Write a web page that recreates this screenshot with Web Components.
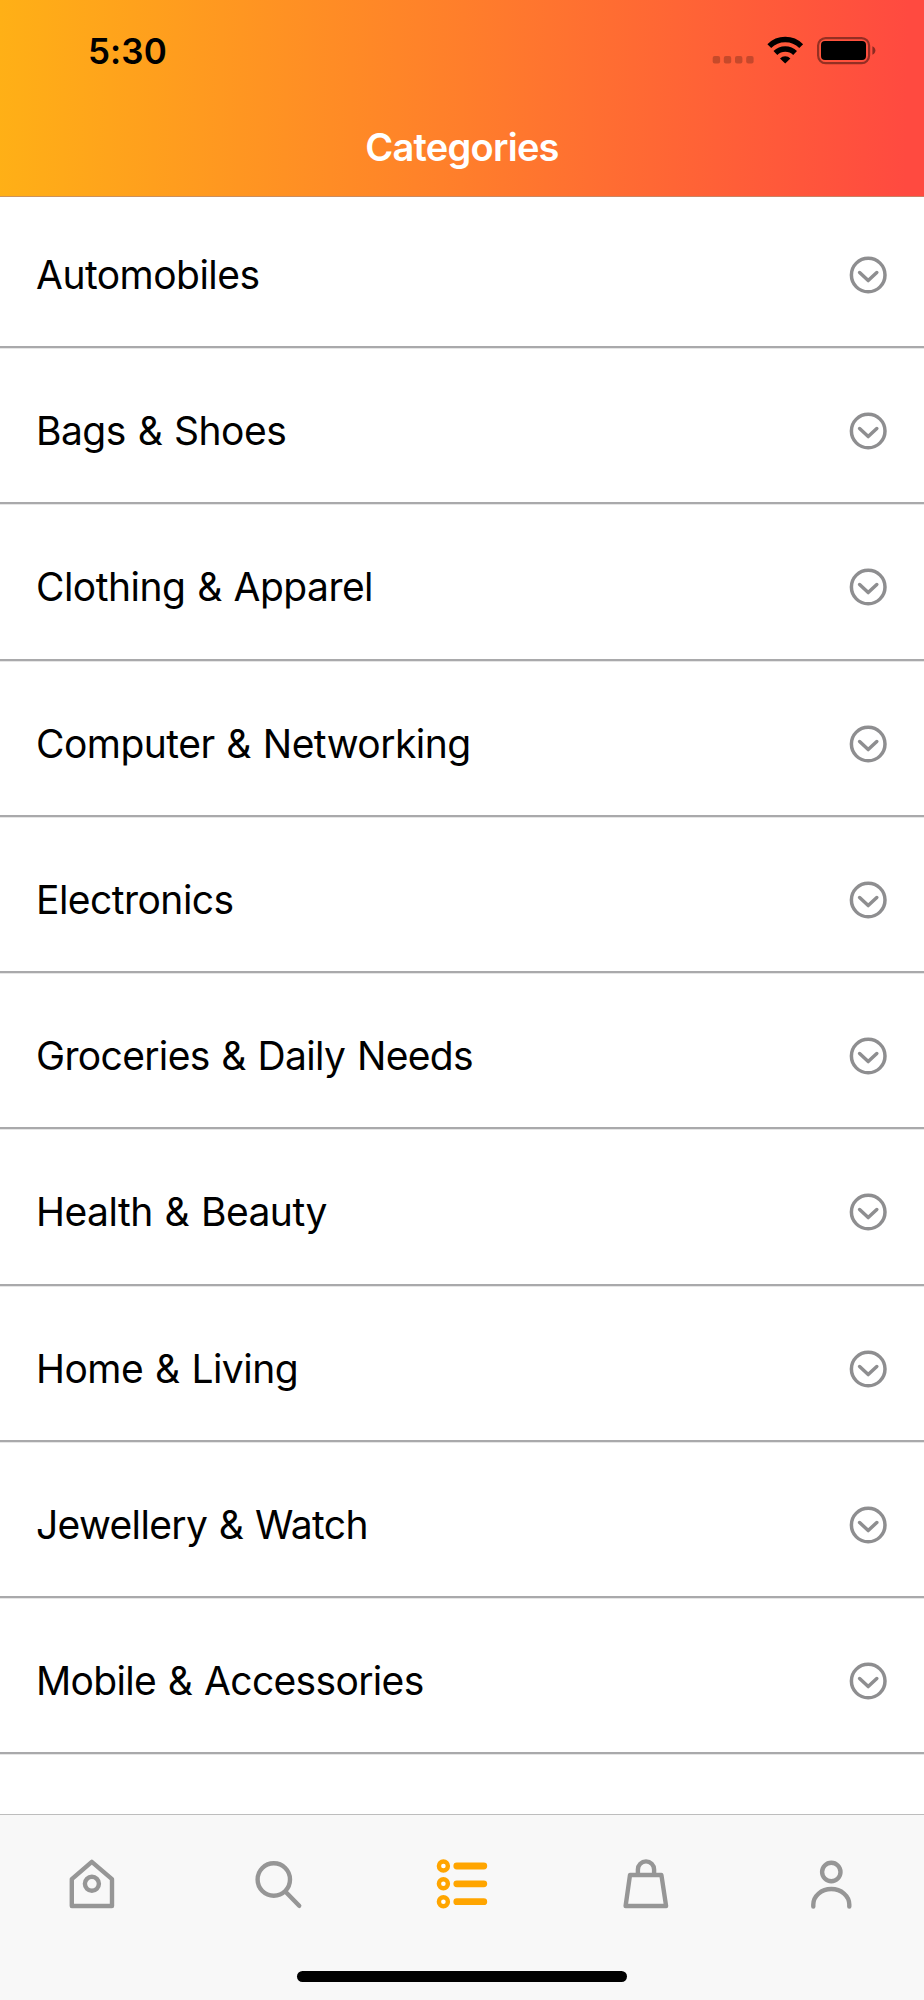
<!DOCTYPE html>
<html lang="en">
<head>
<meta charset="utf-8">
<title>Categories</title>
<style>
  body {
    margin: 0;
    background: #fff;
    font-family: Inter, "Liberation Sans", sans-serif;
    color: #000;
  }

  .tight {
    --tracking: -0.66px;
  }
</style>
</head>
<body>
<app-screen>
  <app-header slot="header" time="5:30">Categories</app-header>
  <category-row>Automobiles</category-row>
  <category-row>Bags &amp; Shoes</category-row>
  <category-row>Clothing &amp; Apparel</category-row>
  <category-row>Computer &amp; Networking</category-row>
  <category-row>Electronics</category-row>
  <category-row class="tight">Groceries &amp; Daily Needs</category-row>
  <category-row>Health &amp; Beauty</category-row>
  <category-row>Home &amp; Living</category-row>
  <category-row class="tight">Jewellery &amp; Watch</category-row>
  <category-row class="tight">Mobile &amp; Accessories</category-row>
  <tab-bar slot="footer">
    <tab-item icon="home"></tab-item>
    <tab-item icon="search"></tab-item>
    <tab-item icon="list" active></tab-item>
    <tab-item icon="bag"></tab-item>
    <tab-item icon="user"></tab-item>
  </tab-bar>
</app-screen>

<script>
class BaseElement extends HTMLElement {
  constructor() {
    super();
    this.attachShadow({ mode: 'open' });
  }

  connectedCallback() {
    this.shadowRoot.innerHTML = this.render();
  }
}

class AppScreen extends BaseElement {
  render() {
    return `
      <style>
        :host {
          display: flex;
          flex-direction: column;
          height: 2000px;
          overflow: hidden;
        }

        .list {
          flex: 1;
          min-height: 0;
          overflow: hidden;
        }

        /* the list is scrolled a little under the header */
        .inner {
          margin-top: -5.2px;
        }
      </style>
      <slot name="header"></slot>
      <div class="list"><div class="inner"><slot></slot></div></div>
      <slot name="footer"></slot>
    `;
  }
}

class StatusBar extends BaseElement {
  render() {
    return `
      <style>
        :host {
          display: flex;
          justify-content: space-between;
          height: 98px;
          padding: 0 48px 0 88px;
        }

        .time {
          margin-top: 29px;
          font-size: 35px;
          line-height: 44px;
          font-weight: 600;
          letter-spacing: 0.1px;
        }

        svg {
          display: block;
          margin-top: 30px;
        }
      </style>
      <span class="time">${this.getAttribute('time')}</span>
      <svg width="164" height="40" viewBox="712 30 164 40">
        <g fill="#000" opacity="0.22">
          <rect x="712.7" y="56" width="7.4" height="7.4" rx="2"/>
          <rect x="723.8" y="56" width="7.4" height="7.4" rx="2"/>
          <rect x="735" y="56" width="7.4" height="7.4" rx="2"/>
          <rect x="746.2" y="56" width="7.4" height="7.4" rx="2"/>
        </g>
        <g fill="none" stroke="#000" stroke-width="5.4">
          <path d="M769.3 46.2a22.5 22.5 0 0 1 31.9 0"/>
          <path d="M775.4 53a14 14 0 0 1 19.7 0"/>
        </g>
        <path d="M785.2 63.6l-5.2-5.2a7.4 7.4 0 0 1 10.4 0z"/>
        <rect x="818.1" y="38.1" width="51" height="25" rx="7.5" fill="none" stroke="#000" stroke-opacity="0.42" stroke-width="2.2"/>
        <rect x="821" y="41" width="45" height="19" rx="4"/>
        <path d="M872.4 46.2c4 1.6 4 6.8 0 8.6z" fill-opacity="0.45"/>
      </svg>
    `;
  }
}

class AppHeader extends BaseElement {
  render() {
    return `
      <style>
        :host {
          display: block;
          box-sizing: border-box;
          flex: none;
          height: 197px;
          border-bottom: 1px solid rgba(190, 140, 110, 0.8);
          background: linear-gradient(91deg, #ffb016 0%, #ff7e2b 50%, #ff4a40 98%);
          position: relative;
          z-index: 1;
        }

        .title {
          text-align: center;
          font-size: 38px;
          line-height: 99px;
          font-weight: 600;
          color: #fff;
          letter-spacing: -0.75px;
        }
      </style>
      <status-bar time="${this.getAttribute('time')}"></status-bar>
      <div class="title"><slot></slot></div>
    `;
  }
}

class CategoryRow extends BaseElement {
  render() {
    return `
      <style>
        :host {
          display: flex;
          align-items: center;
          justify-content: space-between;
          box-sizing: border-box;
          height: 156.25px;
          padding: 12px 36px 0;
          border-bottom: 2px solid #a9a9ab;
          box-shadow: 0 1px #e6e6e6;
        }

        .label {
          font-size: 39px;
          line-height: 48px;
          letter-spacing: var(--tracking, -0.53px);
          word-spacing: 1.4px;
          white-space: nowrap;
        }

        svg {
          display: block;
          flex: none;
        }
      </style>
      <span class="label"><slot></slot></span>
      <svg width="40" height="40" viewBox="0 0 40 40" fill="none" stroke="#8e8e90" stroke-width="3.5" stroke-linecap="round" stroke-linejoin="round">
        <circle cx="20.2" cy="20" r="16.8"/>
        <path d="M11.6 17.5l8.6 8.1 8.6-8.1"/>
      </svg>
    `;
  }
}

const icons = {
  home: `
    <path d="M72.2 1879.2L92.2 1861.8L112.4 1879.2V1906H72.2Z"/>
    <circle cx="92.3" cy="1883.8" r="7"/>`,
  search: `
    <circle cx="274" cy="1879.5" r="16.2"/>
    <path d="M286 1892L299.4 1905.8"/>`,
  list: `
    <g stroke-width="4.4" fill="#fff">
      <circle cx="443.4" cy="1866" r="4.5"/>
      <circle cx="443.4" cy="1883.8" r="4.5"/>
      <circle cx="443.4" cy="1901.7" r="4.5"/>
    </g>
    <path d="M456.8 1866H483.8M456.8 1883.8H483.8M456.8 1901.7H483.8" stroke-width="6.8"/>`,
  bag: `
    <path d="M629.8 1875H661.2L665.9 1906H625.4Z"/>
    <path d="M637.7 1875V1869.5a8.1 8.1 0 0 1 16.2 0V1875" stroke-linecap="butt"/>`,
  user: `
    <circle cx="830.9" cy="1872" r="9.2"/>
    <path d="M812.9 1906.6V1904.6a18 15.6 0 0 1 36 0V1906.6"/>`
};

// left edge of each icon's 60px wide viewBox
const origins = { home: 62.4, search: 247.2, list: 432, bag: 616.8, user: 801.6 };

class TabItem extends BaseElement {
  render() {
    const icon = this.getAttribute('icon');
    return `
      <style>
        :host {
          flex: 1;
          display: flex;
          justify-content: center;
          color: #969696;
        }

        :host([active]) {
          color: #ffa500;
        }

        svg {
          display: block;
        }
      </style>
      <svg width="60" height="60" viewBox="${origins[icon]} 1855 60 60" fill="none" stroke="currentColor"
        stroke-width="4.4" stroke-linecap="round" stroke-linejoin="round">${icons[icon]}</svg>
    `;
  }
}

class TabBar extends BaseElement {
  render() {
    return `
      <style>
        :host {
          display: flex;
          flex-direction: column;
          justify-content: space-between;
          box-sizing: border-box;
          flex: none;
          height: 186px;
          padding: 40px 0 18px;
          border-top: 1px solid #bdbdbd;
          background: #f8f8f8;
        }

        .tabs {
          display: flex;
        }

        .indicator {
          align-self: center;
          width: 330px;
          height: 11px;
          border-radius: 6px;
          background: #000;
        }
      </style>
      <div class="tabs"><slot></slot></div>
      <div class="indicator"></div>
    `;
  }
}

customElements.define('app-screen', AppScreen);
customElements.define('status-bar', StatusBar);
customElements.define('app-header', AppHeader);
customElements.define('category-row', CategoryRow);
customElements.define('tab-item', TabItem);
customElements.define('tab-bar', TabBar);
</script>
</body>
</html>
